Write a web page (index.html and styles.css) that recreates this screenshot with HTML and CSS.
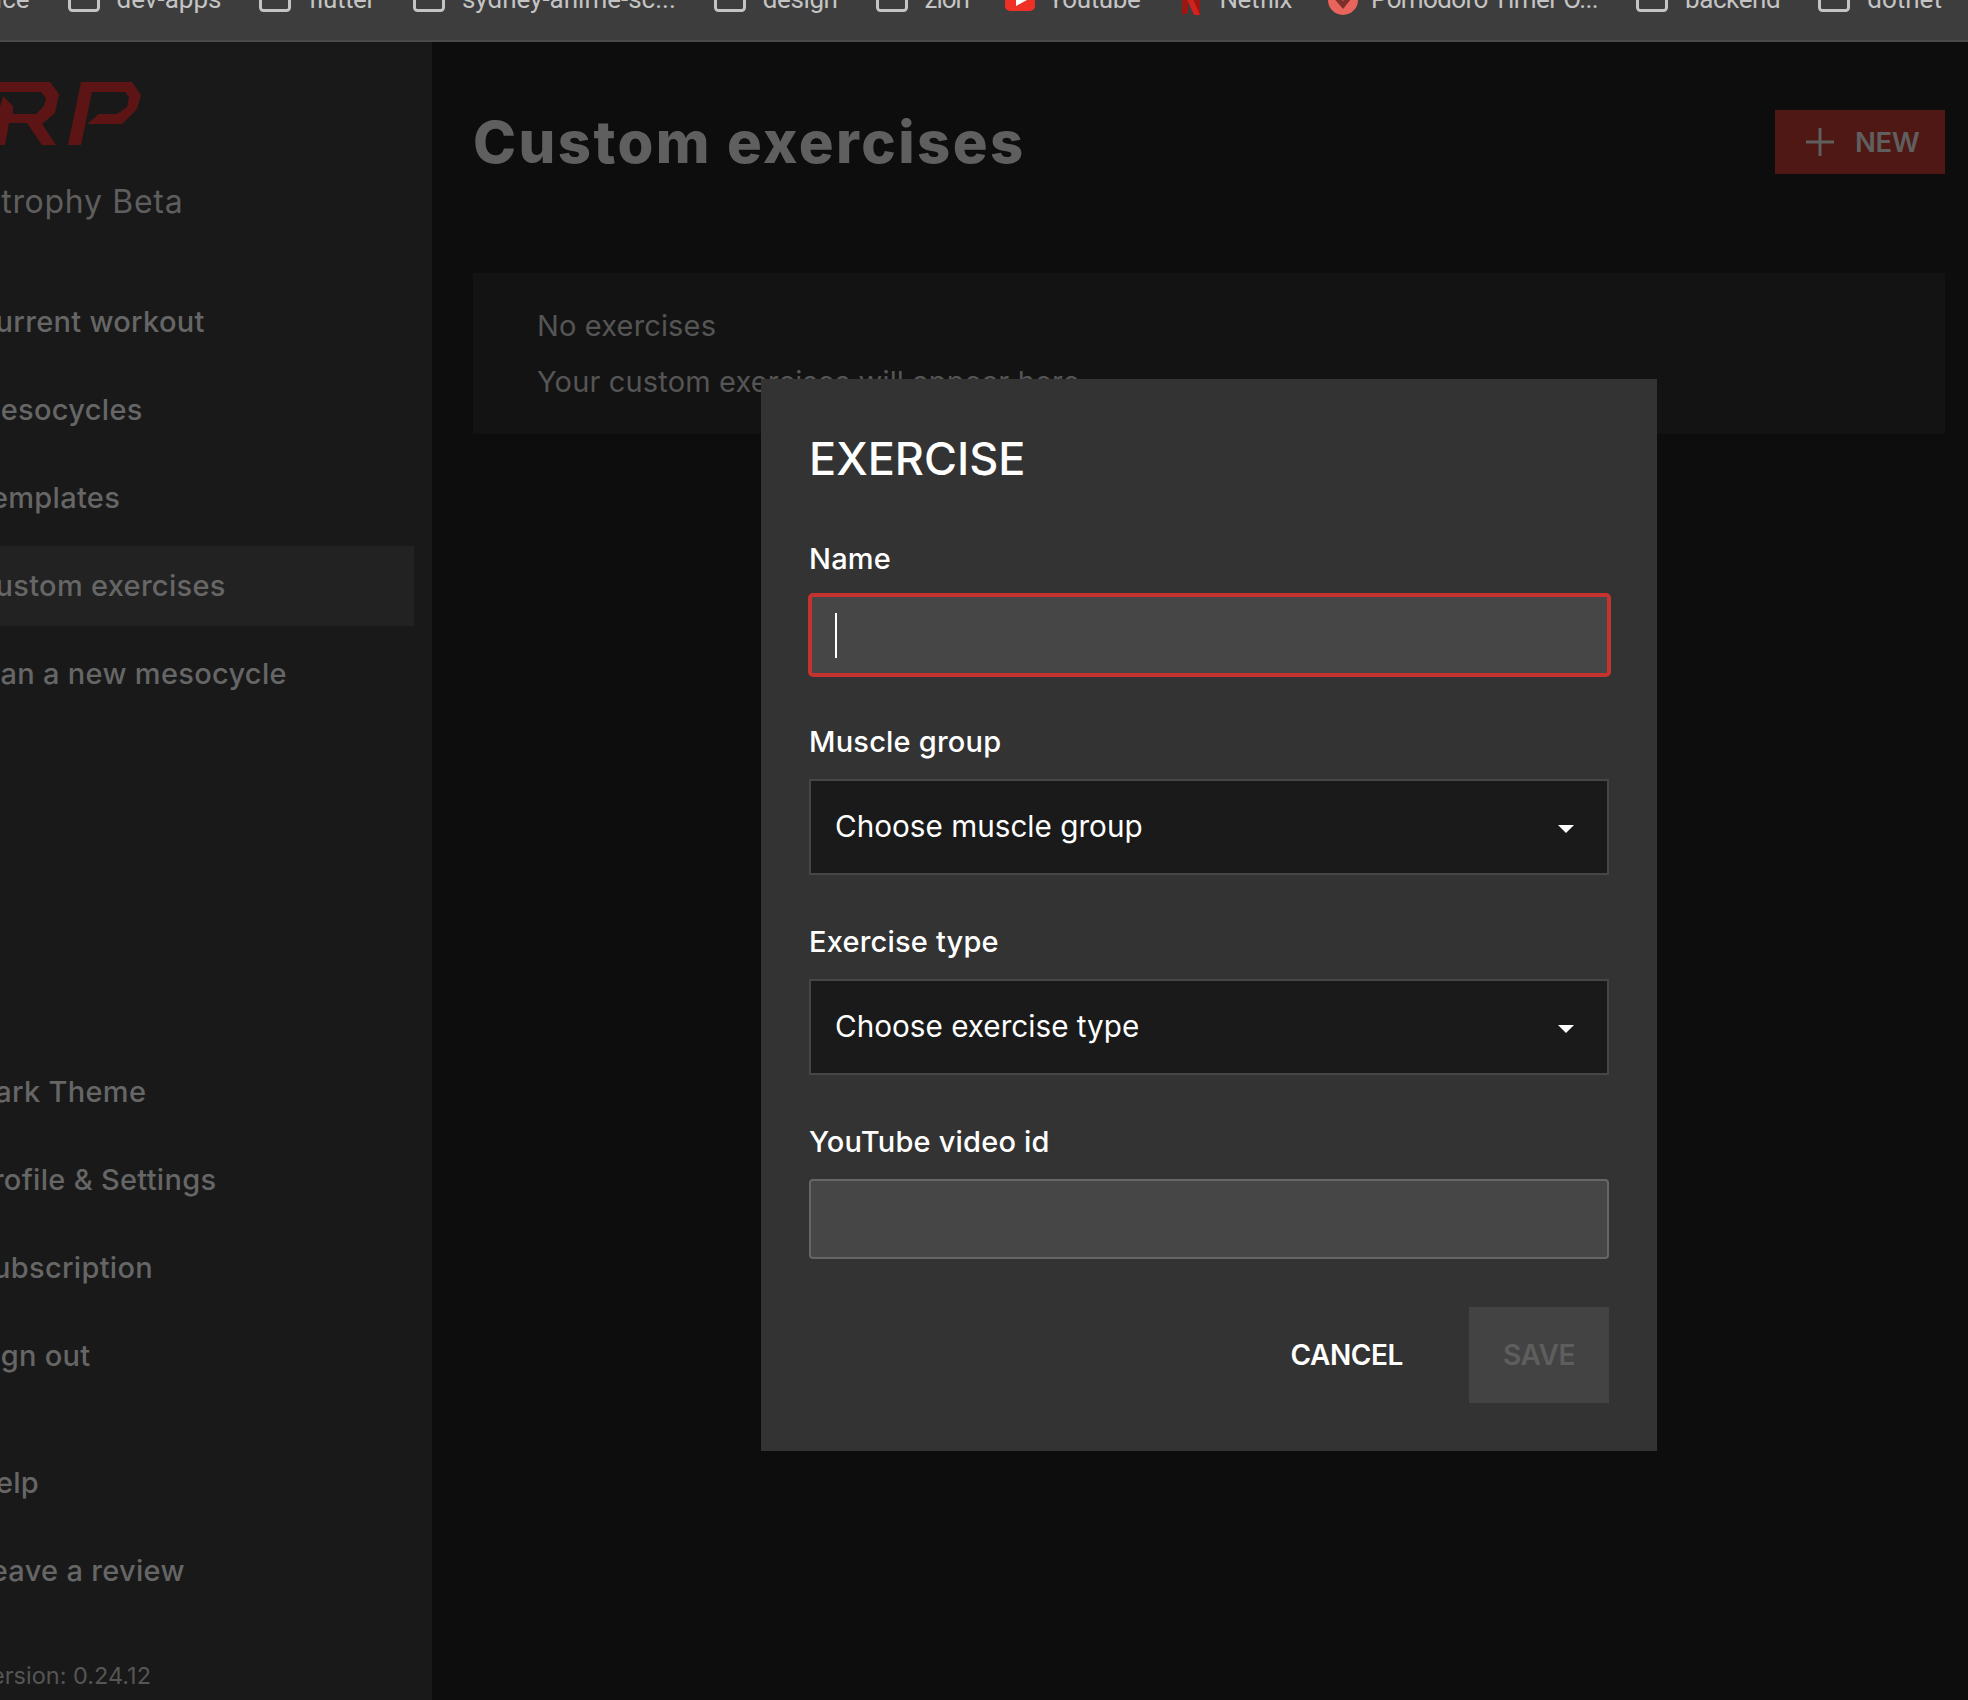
FILE: index.html
```html
<!DOCTYPE html>
<html>
<head>
    <meta charset="utf-8" />
    <title>Custom exercises</title>
    <link rel="stylesheet" href="styles.css">
</head>
<body>
<div class="bookmarks">
    <div class="bookmarks-row">
        <span class="bm"><span class="bm-text">Service</span></span>
        <span class="bm"><svg class="folder" viewBox="0 0 32 32"><rect x="1.5" y="4" width="29" height="26.5" rx="3" /></svg><span class="bm-text">dev-apps</span></span>
        <span class="bm"><svg class="folder" viewBox="0 0 32 32"><rect x="1.5" y="4" width="29" height="26.5" rx="3" /></svg><span class="bm-text tight">flutter</span></span>
        <span class="bm"><svg class="folder" viewBox="0 0 32 32"><rect x="1.5" y="4" width="29" height="26.5" rx="3" /></svg><span class="bm-text">sydney-anime-sc...</span></span>
        <span class="bm"><svg class="folder" viewBox="0 0 32 32"><rect x="1.5" y="4" width="29" height="26.5" rx="3" /></svg><span class="bm-text tight">design</span></span>
        <span class="bm"><svg class="folder" viewBox="0 0 32 32"><rect x="1.5" y="4" width="29" height="26.5" rx="3" /></svg><span class="bm-text tighter">zion</span></span>
        <span class="bm"><svg class="favicon" viewBox="0 0 32 32"><rect x="1" y="8" width="30" height="23" rx="5" fill="#ee3124" /><path d="M12 14 L23 20 L12 26 Z" fill="#fff" /></svg><span class="bm-text tight">Youtube</span></span>
        <span class="bm"><svg class="favicon" viewBox="0 0 32 32"><path d="M7 8 H13 V33 L7 35 Z" fill="#9c1713" /><path d="M19 8 H25 V35 L19 33 Z" fill="#9c1713" /><path d="M7 8 H13 L25 35 H19 Z" fill="#d3221c" /></svg><span class="bm-text tight">Netflix</span></span>
        <span class="bm"><svg class="favicon" viewBox="0 0 32 32"><circle cx="16" cy="20" r="15" fill="#e8645c" /><path d="M9 17 L16 25 L24 15" fill="none" stroke="#7d2f2a" stroke-width="5" /></svg><span class="bm-text tightest">Pomodoro Timer O...</span></span>
        <span class="bm"><svg class="folder" viewBox="0 0 32 32"><rect x="1.5" y="4" width="29" height="26.5" rx="3" /></svg><span class="bm-text tight">backend</span></span>
        <span class="bm"><svg class="folder" viewBox="0 0 32 32"><rect x="1.5" y="4" width="29" height="26.5" rx="3" /></svg><span class="bm-text">dotnet</span></span>
    </div>
</div>

<div class="app">
    <aside class="sidebar">
        <svg class="logo" viewBox="0 0 200 90">
            <polygon points="0,12 50,12 59,24 55,43 42,54 56,75 42,75 27,53 9,53 5,75 0,75 0,37 3,26 13,36 13,44 36,44 44,36 46,28 41,22 0,22" />
            <polygon points="68,75 81,12 132,12 141,25 137,39 122,54 87,54 99,44 117,44 127,37 129,27 125,22 92,22 81,75" />
        </svg>
        <div class="app-name">Hypertrophy Beta</div>

        <nav class="nav nav-main">
            <a class="nav-item">Current workout</a>
            <a class="nav-item">Mesocycles</a>
            <a class="nav-item">Templates</a>
            <a class="nav-item active">Custom exercises</a>
            <a class="nav-item">Plan a new mesocycle</a>
        </nav>
        <nav class="nav nav-account">
            <a class="nav-item">Dark Theme</a>
            <a class="nav-item">Profile &amp; Settings</a>
            <a class="nav-item">Subscription</a>
            <a class="nav-item">Sign out</a>
        </nav>
        <nav class="nav nav-help">
            <a class="nav-item">Help</a>
            <a class="nav-item">Leave a review</a>
        </nav>
        <div class="version">Version: 0.24.12</div>
    </aside>

    <main class="main">
        <header class="main-header">
            <h1>Custom exercises</h1>
            <button class="btn-new">
                <svg class="plus" viewBox="0 0 28 28"><path d="M14 0 V28 M0 14 H28" /></svg>
                NEW
            </button>
        </header>
        <section class="card">
            <p>No exercises</p>
            <p>Your custom exercises will appear here</p>
        </section>
    </main>
</div>

<div class="modal">
    <h2>EXERCISE</h2>
    <div class="field field-name">
        <label>Name</label>
        <div class="input input-focus"><span class="caret"></span></div>
    </div>
    <div class="field field-muscle">
        <label>Muscle group</label>
        <div class="select">Choose muscle group<span class="arrow"></span></div>
    </div>
    <div class="field">
        <label>Exercise type</label>
        <div class="select">Choose exercise type<span class="arrow"></span></div>
    </div>
    <div class="field">
        <label>YouTube video id</label>
        <div class="input"></div>
    </div>
    <div class="modal-actions">
        <button class="btn-cancel">CANCEL</button>
        <button class="btn-save">SAVE</button>
    </div>
</div>
</body>
</html>
```

FILE: styles.css
```css
html, body {
    height: 100%;
}
body {
    margin: 0;
    height: 1700px;
    overflow: hidden;
    display: flex;
    flex-direction: column;
    background: #0d0d0d;
    font-family: Inter, "Open Sans", sans-serif;
}

/* browser bookmarks bar, cut off by the top of the window */
.bookmarks {
    height: 40px;
    flex: none;
    overflow: hidden;
    background: #3d3d3d;
    border-bottom: 2px solid #4b4b4b;
}
.bookmarks-row {
    display: flex;
    gap: 38px;
    height: 32px;
    margin: -20px 0 0 -55px;
}
.bm {
    display: flex;
    gap: 17px;
    height: 32px;
    flex: none;
}
.bm-text {
    font-family: Roboto, sans-serif;
    font-size: 26px;
    line-height: 38px;
    color: #c4c4c4;
    white-space: nowrap;
}
.tight {
    letter-spacing: -.4px;
}
.tightest {
    letter-spacing: -.6px;
}
.tighter {
    letter-spacing: -1px;
}
.folder, .favicon {
    width: 32px;
    height: 32px;
    overflow: visible;
    flex: none;
}
.favicon {
    margin: 0 -5px 0 -3px;
}
.folder rect {
    fill: none;
    stroke: #c4c4c4;
    stroke-width: 3;
}

.app {
    flex: 1;
    display: flex;
    min-height: 0;
}

.sidebar {
    width: 432px;
    flex: none;
    overflow: hidden;
    background: #191919;
    padding-right: 18px;
    box-sizing: border-box;
}
.logo {
    display: block;
    width: 200px;
    height: 90px;
    margin-top: 28px;
    fill: #5c1514;
}
.app-name {
    margin: 22px 0 0 -95px;
    font-size: 32px;
    letter-spacing: .7px;
    line-height: 40px;
    color: #5e5e5e;
    white-space: nowrap;
}
.nav {
    display: flex;
    flex-direction: column;
    gap: 8px;
    margin-left: -26px;
}
.nav-main {
    margin-top: 60px;
}
.nav-account {
    margin-top: 338px;
}
.nav-help {
    margin-top: 47px;
}
.nav-item {
    height: 80px;
    line-height: 80px;
    font-size: 29px;
    letter-spacing: .3px;
    font-weight: 500;
    color: #666;
    white-space: nowrap;
}
.nav-item.active {
    background: #222;
}
.version {
    margin: 50px 0 0 -24px;
    font-size: 23.5px;
    line-height: 30px;
    color: #555;
    white-space: nowrap;
}

.main {
    flex: 1;
    padding: 68px 23px 0 41px;
    min-width: 0;
}
.main-header {
    display: flex;
    justify-content: space-between;
    align-items: center;
    height: 64px;
}
h1 {
    margin: 0;
    font-size: 58px;
    font-weight: 800;
    letter-spacing: 2.4px;
    color: #5f5f5f;
}
.btn-new {
    display: flex;
    align-items: center;
    gap: 21px;
    width: 170px;
    height: 64px;
    padding: 0 0 0 31px;
    border: 0;
    background: #501814;
    color: #5f5f5f;
    font-family: inherit;
    font-size: 27.5px;
    letter-spacing: -.4px;
    font-weight: 600;
}
.plus {
    width: 28px;
    height: 28px;
    flex: none;
    stroke: #5f5f5f;
    stroke-width: 3;
    fill: none;
}
.card {
    height: 161px;
    margin-top: 99px;
    padding: 33px 0 0 64px;
    box-sizing: border-box;
    background: #131313;
    color: #555;
    font-size: 29px;
    letter-spacing: .15px;
    line-height: 40px;
}
.card p {
    margin: 0 0 16px;
}

/* dialog */
.modal {
    position: absolute;
    left: 761px;
    top: 379px;
    width: 896px;
    height: 1072px;
    box-sizing: border-box;
    padding: 50px 48px 0;
    background: #333;
    color: #fff;
}
h2 {
    margin: 0;
    font-size: 45px;
    line-height: 60px;
    font-weight: 500;
}
.field {
    margin-top: 46px;
}
.field-name {
    margin-top: 49px;
}
.field-name label {
    margin-bottom: 13px;
}
.field-muscle {
    margin-top: 44px;
}
label {
    display: block;
    margin-bottom: 16px;
    font-size: 29px;
    letter-spacing: .2px;
    line-height: 42px;
    font-weight: 500;
}
.input {
    height: 80px;
    box-sizing: border-box;
    background: #464646;
    border: 2px solid #666;
    border-radius: 4px;
}
.input-focus {
    display: flex;
    align-items: center;
    height: 84px;
    margin: 0 -2px 0 -1px;
    padding-left: 23px;
    border: 4px solid #c43330;
    border-radius: 5px;
}
.caret {
    width: 2px;
    height: 45px;
    background: #fff;
}
.select {
    display: flex;
    align-items: center;
    justify-content: space-between;
    height: 96px;
    box-sizing: border-box;
    padding: 0 33px 2px 24px;
    background: #1a1a1a;
    border: 2px solid #464646;
    font-size: 29.7px;
}
.arrow {
    width: 0;
    height: 0;
    margin-top: 5px;
    border-left: 8px solid transparent;
    border-right: 8px solid transparent;
    border-top: 8px solid #fff;
}
.modal-actions {
    display: flex;
    justify-content: flex-end;
    margin-top: 48px;
}
.modal-actions button {
    height: 96px;
    border: 0;
    font-family: inherit;
    font-size: 28px;
    letter-spacing: -.4px;
    font-weight: 600;
}
.btn-cancel {
    padding: 0 66px 0 0;
    background: none;
    color: #fff;
}
.btn-save {
    width: 140px;
    background: #434343;
    color: #5e5e5e;
}
```
